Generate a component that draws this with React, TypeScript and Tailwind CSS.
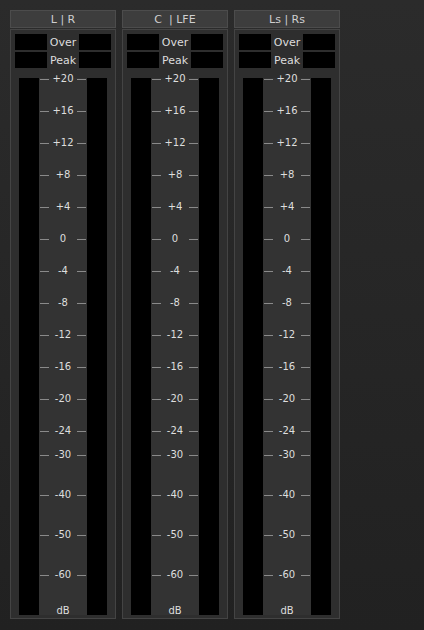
import React from "react";

const ticks: { label: string; cls: string; line: boolean }[] = [
  { label: "+20", cls: "-mt-[7px]", line: true },
  { label: "+16", cls: "mt-[16px]", line: true },
  { label: "+12", cls: "mt-[16px]", line: true },
  { label: "+8", cls: "mt-[16px]", line: true },
  { label: "+4", cls: "mt-[16px]", line: true },
  { label: "0", cls: "mt-[16px]", line: true },
  { label: "-4", cls: "mt-[16px]", line: true },
  { label: "-8", cls: "mt-[16px]", line: true },
  { label: "-12", cls: "mt-[16px]", line: true },
  { label: "-16", cls: "mt-[16px]", line: true },
  { label: "-20", cls: "mt-[16px]", line: true },
  { label: "-24", cls: "mt-[16px]", line: true },
  { label: "-30", cls: "mt-[8px]", line: true },
  { label: "-40", cls: "mt-[24px]", line: true },
  { label: "-50", cls: "mt-[24px]", line: true },
  { label: "-60", cls: "mt-[24px]", line: true },
  { label: "dB", cls: "mt-[20px]", line: false },
];

function Meter({ title }: { title: string }) {
  return (
    <div className="flex w-[106px] flex-col">
      <div className="flex h-[18px] items-center justify-center border border-[#4c4c4c] bg-[#3d3d3d] text-[11px] leading-none text-[#cfcfcf] whitespace-pre">
        {title}
      </div>
      <div className="mt-[1px] flex h-[590px] flex-col border border-[#444] bg-[#2e2e2e] px-[4px] pt-[4px]">
        <div className="flex h-[16px] items-center">
          <div className="h-[16px] w-[32px] bg-black" />
          <div className="w-[32px] pt-[1px] text-center text-[11px] leading-none text-[#dcdcdc]">Over</div>
          <div className="h-[16px] w-[32px] bg-black" />
        </div>
        <div className="mt-[2px] flex h-[16px] items-center">
          <div className="h-[16px] w-[32px] bg-black" />
          <div className="w-[32px] pt-[1px] text-center text-[11px] leading-none text-[#dcdcdc]">Peak</div>
          <div className="h-[16px] w-[32px] bg-black" />
        </div>
        <div className="mt-[2px] flex h-[545px]">
          <div className="flex w-[24px] pl-[4px]">
            <div className="mt-[8px] w-[20px] bg-black" />
          </div>
          <div className="mt-[8px] flex w-[48px] flex-col bg-[#333333]">
            {ticks.map((t) => (
              <div key={t.label} className={`flex h-[16px] shrink-0 items-center justify-between px-[1px] ${t.cls}`}>
                <div className={t.line ? "h-px w-[9px] bg-[#8a8a8a]" : "h-px w-[9px]"} />
                <div className="text-[10px] leading-none text-[#dedede]">{t.label}</div>
                <div className={t.line ? "h-px w-[9px] bg-[#8a8a8a]" : "h-px w-[9px]"} />
              </div>
            ))}
          </div>
          <div className="flex w-[24px] pr-[4px]">
            <div className="mt-[8px] w-[20px] bg-black" />
          </div>
        </div>
      </div>
    </div>
  );
}

export default function App() {
  return (
    <div
      className="flex h-[630px] w-[424px] gap-[6px] overflow-hidden bg-gradient-to-b from-[#2b2b2b] to-[#212121] pl-[10px] pt-[10px]"
      style={{ fontFamily: '"DejaVu Sans", "Liberation Sans", sans-serif' }}
    >
      <Meter title="L | R" />
      <Meter title="C  | LFE" />
      <Meter title="Ls | Rs" />
    </div>
  );
}
